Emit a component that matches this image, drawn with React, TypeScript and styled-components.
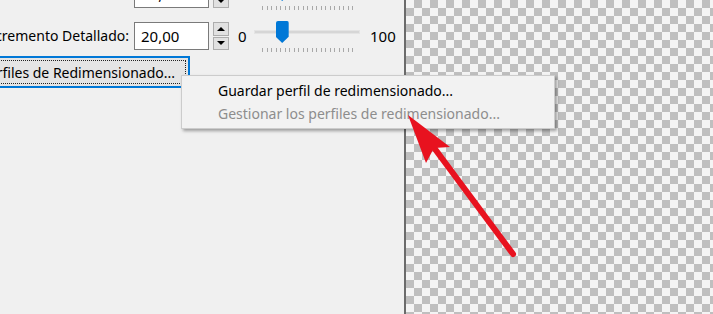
import React from "react";
import styled, { createGlobalStyle } from "styled-components";

const GlobalStyle = createGlobalStyle`
  html, body {
    margin: 0;
    padding: 0;
    overflow: hidden;
    background: #f0f0f0;
  }
  body {
    font-family: "Noto Sans", "Open Sans", sans-serif;
  }
`;

const Page = styled.div`
  position: relative;
  width: 713px;
  height: 314px;
  display: flex;
  overflow: hidden;
`;

const LeftPanel = styled.div`
  width: 404px;
  flex: none;
  background: #f0f0f0;
  position: relative;
`;

const Divider = styled.div`
  width: 2px;
  flex: none;
  background: #6b6b6b;
`;

const Canvas = styled.div`
  flex: 1;
  background-color: #f4f4f4;
  background-image: conic-gradient(
    #bfbfbf 0 25%,
    #f4f4f4 0 50%,
    #bfbfbf 0 75%,
    #f4f4f4 0
  );
  background-size: 16px 16px;
`;

const Form = styled.div`
  margin-top: -20px;
  margin-left: -70px;
  display: flex;
  flex-direction: column;
  gap: 14px;
`;

const Row = styled.div`
  display: grid;
  grid-template-columns: 200px 75px 16px 17px 106px 33px;
  column-gap: 4px;
  align-items: start;
  height: 28px;
`;

const Label = styled.div`
  font-size: 14px;
  color: #000;
  text-align: right;
  line-height: 28px;
  white-space: nowrap;
  margin-right: 1px;
`;

const Input = styled.div`
  box-sizing: border-box;
  height: 28px;
  background: #fff;
  border: 1px solid #7a7a7a;
  font-size: 15px;
  line-height: 26px;
  padding-left: 6px;
  color: #000;
`;

const Spin = styled.div`
  display: flex;
  flex-direction: column;
  gap: 1px;
  height: 28px;
`;

const SpinButton = styled.div<{ $down?: boolean }>`
  box-sizing: border-box;
  flex: 1;
  background: #e1e1e1;
  border: 1px solid #adadad;
  display: flex;
  align-items: center;
  justify-content: center;

  &::after {
    content: "";
    width: 0;
    height: 0;
    border-left: 4px solid transparent;
    border-right: 4px solid transparent;
    ${p =>
      p.$down
        ? "border-top: 4px solid #000;"
        : "border-bottom: 4px solid #000;"}
  }
`;

const RangeText = styled.div<{ $right?: boolean }>`
  font-size: 15px;
  line-height: 28px;
  color: #000;
  padding-left: ${p => (p.$right ? "6px" : "5px")};
  white-space: nowrap;
`;

const Slider = styled.div`
  position: relative;
  height: 32px;
`;

const Track = styled.div`
  position: absolute;
  left: 0;
  right: 0;
  top: 8px;
  height: 2px;
  background: #d6d6d6;
  border: 1px solid #e4e4e4;
`;

const Thumb = styled.div`
  position: absolute;
  top: -1px;
  width: 13px;
  height: 22px;
  background: #0078d7;
  clip-path: polygon(0 0, 100% 0, 100% 72%, 50% 100%, 0 72%);
  border-radius: 2px 2px 0 0;
`;

const Ticks = styled.div`
  position: absolute;
  left: 8px;
  right: 7px;
  top: 26px;
  height: 4px;
  display: flex;
  justify-content: space-between;
`;

const Tick = styled.span`
  width: 1px;
  height: 4px;
  background: #a8a8a8;
`;

const ProfileButton = styled.div`
  margin-top: 6px;
  margin-left: -30px;
  box-sizing: border-box;
  width: 220px;
  height: 32px;
  background: #e5e5e5;
  border: 2px solid #0078d7;
  padding: 2px;
`;

const FocusRect = styled.div`
  box-sizing: border-box;
  height: 100%;
  border: 1px dotted #222;
  font-size: 14px;
  line-height: 24px;
  color: #000;
  text-align: right;
  padding-right: 10px;
  white-space: nowrap;
`;

const Menu = styled.div`
  position: absolute;
  left: 181px;
  top: 75px;
  width: 374px;
  box-sizing: border-box;
  padding: 3px 0;
  background: #f2f2f2;
  border: 1px solid #cccccc;
  box-shadow: 2px 2px 3px rgba(0, 0, 0, 0.35);
`;

const MenuItem = styled.div<{ $disabled?: boolean }>`
  font-size: 14px;
  line-height: 23px;
  padding-left: 36px;
  color: ${p => (p.$disabled ? "#8d8d8d" : "#000")};
  white-space: nowrap;
`;

const Arrow = styled.svg`
  position: absolute;
  left: 0;
  top: 0;
  pointer-events: none;
`;

const ticks = Array.from({ length: 21 }, (_, i) => i);

const SliderControl = ({ value }: { value: number }) => (
  <Slider>
    <Track />
    <Thumb style={{ left: `${20 + (value / 100) * 91 - 6.5 - 10}px` }} />
    <Ticks>
      {ticks.map(t => (
        <Tick key={t} />
      ))}
    </Ticks>
  </Slider>
);

export default function App() {
  return (
    <>
      <GlobalStyle />
      <Page>
        <LeftPanel>
          <Form>
            <Row>
              <Label>Incremento:</Label>
              <Input>10,00</Input>
              <Spin>
                <SpinButton />
                <SpinButton $down />
              </Spin>
              <RangeText>0</RangeText>
              <SliderControl value={20} />
              <RangeText $right>100</RangeText>
            </Row>
            <Row>
              <Label>Incremento Detallado:</Label>
              <Input>20,00</Input>
              <Spin>
                <SpinButton />
                <SpinButton $down />
              </Spin>
              <RangeText>0</RangeText>
              <SliderControl value={20} />
              <RangeText $right>100</RangeText>
            </Row>
          </Form>
          <ProfileButton>
            <FocusRect>Perfiles de Redimensionado...</FocusRect>
          </ProfileButton>
        </LeftPanel>
        <Divider />
        <Canvas />
        <Menu>
          <MenuItem>Guardar perfil de redimensionado...</MenuItem>
          <MenuItem $disabled>Gestionar los perfiles de redimensionado...</MenuItem>
        </Menu>
        <Arrow width="713" height="314" viewBox="0 0 713 314">
          <line
            x1="513"
            y1="254"
            x2="432"
            y2="145"
            stroke="#e8121f"
            strokeWidth="6"
            strokeLinecap="round"
          />
          <polygon points="408,115 450,147 434,148 426,163" fill="#e8121f" />
        </Arrow>
      </Page>
    </>
  );
}
